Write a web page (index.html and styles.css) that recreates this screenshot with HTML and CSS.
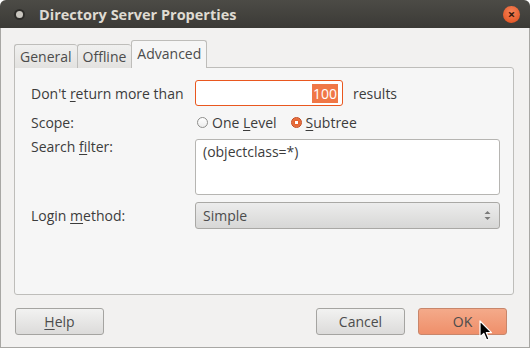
FILE: index.html
```html
<!DOCTYPE html>
<html lang="en">
<head>
    <meta charset="UTF-8">
    <title>Directory Server Properties</title>
    <link rel="stylesheet" href="styles.css">
</head>
<body>
    <div class="window">
        <div class="titlebar">
            <span class="menu-dot"></span>
            <span class="title">Directory Server Properties</span>
            <span class="close">&#215;</span>
        </div>

        <div class="content">
            <div class="tabs">
                <div class="tab">General</div>
                <div class="tab">Offline</div>
                <div class="tab active">Advanced</div>
            </div>

            <div class="frame">
                <div class="form">
                    <label class="lbl">Don't <u>r</u>eturn more than</label>
                    <div class="row">
                        <div class="entry"><span class="sel">100</span></div>
                        <span class="suffix">results</span>
                    </div>

                    <label class="lbl">Scope:</label>
                    <div class="row radios">
                        <span class="radio"><span class="dot"></span><span>One <u>L</u>evel</span></span>
                        <span class="radio"><span class="dot on"></span><span><u>S</u>ubtree</span></span>
                    </div>

                    <label class="lbl top">Search <u>f</u>ilter:</label>
                    <div class="textarea">(objectclass=*)</div>

                    <label class="lbl">Login <u>m</u>ethod:</label>
                    <div class="combo">
                        <span>Simple</span>
                        <svg width="7" height="11" viewBox="0 0 7 11">
                            <path d="M0.5 4 L3.5 1 L6.5 4 Z" fill="#7a7a7a"/>
                            <path d="M0.5 7 L3.5 10 L6.5 7 Z" fill="#7a7a7a"/>
                        </svg>
                    </div>
                </div>
            </div>

            <div class="buttons">
                <button class="btn"><u>H</u>elp</button>
                <div class="spacer"></div>
                <button class="btn">Cancel</button>
                <button class="btn ok">OK</button>
            </div>
        </div>

        <svg class="pointer" width="14" height="22" viewBox="0 0 14 22">
            <path d="M1 1 L1 17 L4.8 13.4 L7.6 20 L10 19 L7.3 12.6 L12.5 12.6 Z" fill="#000" stroke="#fff" stroke-width="1.2" stroke-linejoin="round"/>
        </svg>
    </div>
</body>
</html>
```

FILE: styles.css
```css
body {
    margin: 0;
    background: #ffffff;
    font-family: "Open Sans", "DejaVu Sans", sans-serif;
    font-size: 14px;
    color: #3c3c3c;
}
u {
    text-decoration: underline;
    text-underline-offset: 2px;
}
.window {
    position: relative;
    width: 530px;
    height: 348px;
    display: flex;
    flex-direction: column;
    background-color: #f2f1f0;
    border-radius: 6px 6px 0 0;
    overflow: hidden;
}
.titlebar {
    height: 28px;
    flex: none;
    display: flex;
    align-items: center;
    background: linear-gradient(#4c4b46, #3b3a36);
    color: #dfdbd2;
}
.menu-dot {
    width: 7px;
    height: 7px;
    margin-left: 16px;
    border-radius: 50%;
    background: #c9c6bf;
    box-shadow: 0 0 0 2px #2d2c29;
}
.title {
    margin-left: 16px;
    font-weight: bold;
    font-size: 14.5px;
    flex: 1;
}
.close {
    width: 17px;
    height: 17px;
    margin-right: 10px;
    border-radius: 50%;
    background: radial-gradient(circle at 50% 35%, #f6845a, #df4b18);
    color: #3a1a0c;
    font-size: 13px;
    line-height: 16px;
    text-align: center;
    font-weight: bold;
}
.content {
    flex: 1;
    display: flex;
    flex-direction: column;
    border: 1px solid #a8a7a4;
    border-top: none;
    padding: 13px 15px 0 13px;
}
.tabs {
    display: flex;
    align-items: flex-end;
    height: 27px;
    margin-bottom: -1px;
    position: relative;
    z-index: 1;
}
.tab {
    height: 23px;
    padding: 0 5px;
    line-height: 23px;
    border: 1px solid #bebdba;
    border-bottom: none;
    border-right: none;
    border-radius: 3px 3px 0 0;
    background: linear-gradient(#f0f0ef, #e3e2e0);
    color: #4c4c4c;
}
.tab.active {
    height: 27px;
    line-height: 25px;
    border-right: 1px solid #bebdba;
    background: #f6f6f6;
    padding: 0 5px;
}
.frame {
    height: 228px;
    box-sizing: border-box;
    border: 1px solid #bebdba;
    border-radius: 0 3px 3px 3px;
    background: #f6f6f6;
    padding: 12px 14px 0 16px;
}
.form {
    display: grid;
    grid-template-columns: 164px 305px;
    row-gap: 7px;
    align-items: center;
}
.lbl {
    color: #3c3c3c;
}
.lbl.top {
    align-self: start;
    margin-top: -2px;
}
.row {
    display: flex;
    align-items: center;
}
.entry {
    width: 148px;
    height: 26px;
    box-sizing: border-box;
    border: 1px solid #e9571f;
    border-radius: 3px;
    background: #fff;
    display: flex;
    align-items: center;
    justify-content: flex-end;
    padding-right: 4px;
}
.sel {
    background: #f07746;
    color: #fff;
    line-height: 19px;
    padding: 0 1px;
}
.suffix {
    margin-left: 10px;
}
.radios {
    gap: 14px;
    height: 18px;
    margin-left: 2px;
}
.radio {
    display: flex;
    align-items: center;
    gap: 4px;
}
.dot {
    width: 11px;
    height: 11px;
    box-sizing: border-box;
    border-radius: 50%;
    border: 1px solid #8e8e8c;
    background: linear-gradient(#ffffff, #ececec);
}
.dot.on {
    border-color: #c4471c;
    background: radial-gradient(circle, #ffffff 0 1.5px, #e4602c 2px, #f08a5f 100%);
}
.textarea {
    height: 56px;
    box-sizing: border-box;
    border: 1px solid #b6b5b2;
    border-radius: 3px;
    background: #fff;
    padding: 2px 7px;
}
.combo {
    height: 27px;
    box-sizing: border-box;
    border: 1px solid #a9a8a5;
    border-radius: 3px;
    background: linear-gradient(#ececec, #d7d7d6);
    display: flex;
    align-items: center;
    justify-content: space-between;
    padding: 0 8px 0 7px;
    color: #4c4c4c;
}
.buttons {
    display: flex;
    align-items: center;
    gap: 13px;
    padding: 13px 7px 0 1px;
}
.spacer {
    flex: 1;
}
.btn {
    width: 89px;
    height: 27px;
    font-family: inherit;
    font-size: 14px;
    color: #4c4c4c;
    border: 1px solid #a5a4a1;
    border-radius: 3px;
    background: linear-gradient(#f2f2f1, #dcdbda);
    padding: 0;
}
.btn.ok {
    border-color: #c8866b;
    background: linear-gradient(#f4aa8a, #ef8f6a);
}
.pointer {
    position: absolute;
    left: 479px;
    top: 320px;
}
```
